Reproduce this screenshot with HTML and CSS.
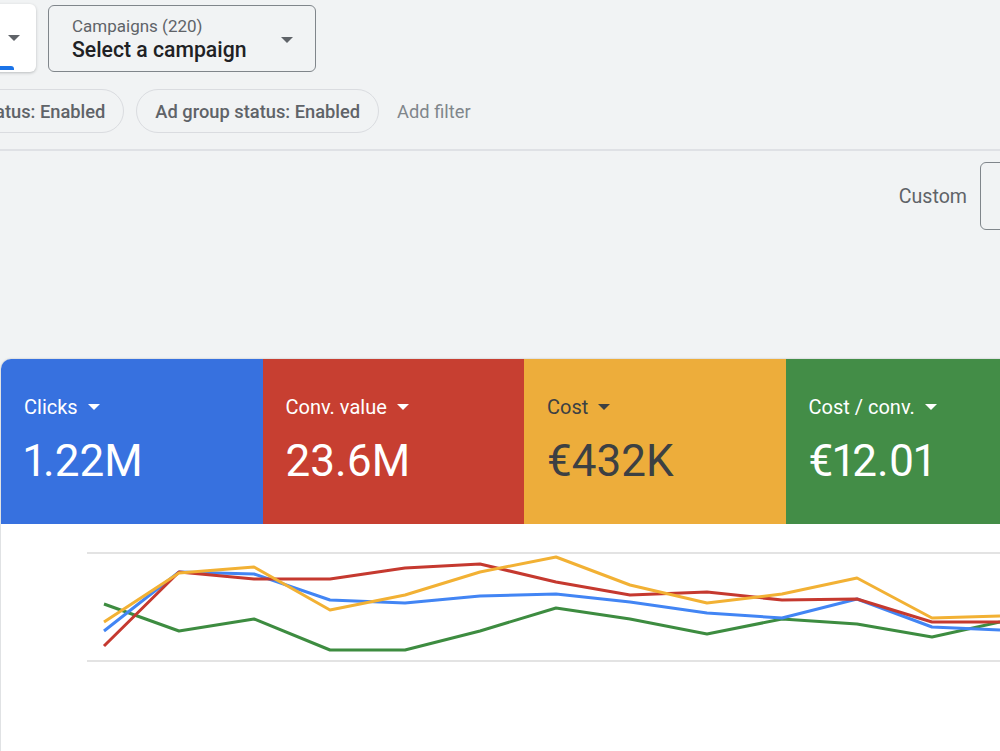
FILE: index.html
```html
<!DOCTYPE html>
<html lang="en">
<head>
<meta charset="utf-8">
<title>Overview</title>
<link rel="stylesheet" href="styles.css">
</head>
<body>
<div class="top-row">
  <div class="prev-card">
    <svg class="caret" width="12" height="6" viewBox="0 0 12 6"><path d="M0 0h12L6 6z" fill="#5f6368"/></svg>
  </div>
  <div class="campaign-select">
    <div class="cs-text">
      <div class="cs-label">Campaigns (220)</div>
      <div class="cs-value">Select a campaign</div>
    </div>
    <svg class="caret" width="12" height="6" viewBox="0 0 12 6"><path d="M0 0h12L6 6z" fill="#5f6368"/></svg>
  </div>
</div>
<div class="chips">
  <div class="chip chip-first">Campaign status: Enabled</div>
  <div class="chip">Ad group status: Enabled</div>
  <div class="add-filter">Add filter</div>
</div>
<div class="divider"></div>
<div class="date-row">
  <span class="custom">Custom</span>
  <div class="date-box"></div>
</div>
<div class="panel">
  <div class="metrics">
    <div class="metric blue">
      <div class="m-label">Clicks <svg width="12" height="6" viewBox="0 0 12 6"><path d="M0 0h12L6 6z" fill="currentColor"/></svg></div>
      <div class="m-value">1.22M</div>
    </div>
    <div class="metric red">
      <div class="m-label">Conv. value <svg width="12" height="6" viewBox="0 0 12 6"><path d="M0 0h12L6 6z" fill="currentColor"/></svg></div>
      <div class="m-value">23.6M</div>
    </div>
    <div class="metric yellow">
      <div class="m-label">Cost <svg width="12" height="6" viewBox="0 0 12 6"><path d="M0 0h12L6 6z" fill="currentColor"/></svg></div>
      <div class="m-value">€432K</div>
    </div>
    <div class="metric green">
      <div class="m-label">Cost / conv. <svg width="12" height="6" viewBox="0 0 12 6"><path d="M0 0h12L6 6z" fill="currentColor"/></svg></div>
      <div class="m-value">€12.01</div>
    </div>
  </div>
  <div class="chart">
    <svg class="chart-svg" width="1000" height="228" viewBox="0 523 1000 228">
      <line x1="87" y1="552" x2="1000" y2="552" stroke="#e3e3e3" stroke-width="2"/>
      <line x1="87" y1="660" x2="1000" y2="660" stroke="#e3e3e3" stroke-width="2"/>
      <g fill="none" stroke-width="3" stroke-linejoin="round">
        <polyline stroke="#3d8c40" points="104,603 179,630 254,618 330,649 405,649 480,630 556,607 630,618 707,633 782,618 857,623 932,636 1000,621"/>
        <polyline stroke="#4285f4" points="104,630 179,571 254,573 330,599 405,602 480,595 556,593 630,601 707,612 782,617 857,598 932,626 1000,629"/>
        <polyline stroke="#c5392f" points="104,645 179,571 254,578 330,578 405,567 480,563 556,581 630,594 707,591 782,599 857,598 932,621 1000,621"/>
        <polyline stroke="#f2b134" points="104,621 179,572 254,566 330,609 405,594 480,571 556,556 630,584 707,602 782,593 857,577 932,617 1000,615"/>
      </g>
    </svg>
  </div>
</div>
</body>
</html>
```
FILE: styles.css
```css
html, body {
  margin: 0;
  padding: 0;
}
body {
  background: #f1f3f4;
  font-family: Roboto, "Liberation Sans", sans-serif;
  color: #202124;
  overflow: hidden;
  width: 1000px;
  height: 751px;
}
.top-row {
  display: flex;
  gap: 12px;
  padding-top: 4px;
  height: 68px;
}
.prev-card {
  position: relative;
  width: 80px;
  margin-left: -44px;
  height: 68px;
  background: #fff;
  border-radius: 6px;
  box-shadow: 0 1px 3px rgba(60,64,67,.3);
  display: flex;
  align-items: center;
  justify-content: flex-end;
  padding-right: 16px;
  box-sizing: border-box;
}
.prev-card::after {
  content: "";
  position: absolute;
  left: 0;
  bottom: 2px;
  width: 58px;
  height: 4px;
  background: #1a73e8;
  border-radius: 0 3px 0 0;
}
.campaign-select {
  margin-top: 1px;
  width: 268px;
  height: 67px;
  box-sizing: border-box;
  border: 1px solid #80868b;
  border-radius: 6px;
  display: flex;
  align-items: center;
  justify-content: space-between;
  padding: 2px 22px 0 23px;
}
.cs-label {
  font-size: 17px;
  color: #5f6368;
  line-height: 20px;
}
.cs-value {
  font-size: 21.2px;
  font-weight: 500;
  color: #202124;
  line-height: 28px;
}
.chips {
  display: flex;
  align-items: center;
  gap: 12px;
  margin-top: 17px;
  height: 44px;
}
.chip {
  height: 44px;
  box-sizing: border-box;
  border: 1px solid #dadce0;
  border-radius: 22px;
  padding: 0 18px;
  display: flex;
  align-items: center;
  font-size: 18.3px;
  font-weight: 500;
  color: #5f6368;
  white-space: nowrap;
}
.chip-first {
  margin-left: -127px;
}
.add-filter {
  margin-left: 6px;
  font-size: 18.3px;
  color: #80868b;
}
.divider {
  margin-top: 16px;
  height: 2px;
  background: #dfe1e5;
}
.date-row {
  display: flex;
  align-items: center;
  justify-content: flex-end;
  gap: 13px;
  margin-top: 11px;
  height: 68px;
  margin-right: -100px;
}
.custom {
  font-size: 19.6px;
  color: #5f6368;
}
.date-box {
  width: 120px;
  height: 68px;
  box-sizing: border-box;
  border: 1px solid #80868b;
  border-radius: 6px;
}
.panel {
  margin-top: 129px;
  margin-left: 1px;
  width: 1100px;
  background: #fff;
  border-radius: 10px 0 0 0;
  box-shadow: 0 0 2px rgba(60,64,67,.35);
  overflow: hidden;
  height: 400px;
}
.metrics {
  display: flex;
}
.metric {
  width: 261.5px;
  height: 165px;
  box-sizing: border-box;
  padding: 36px 0 0 23px;
  color: #fff;
}
.blue { background: #3771df; }
.red { background: #c73f31; }
.yellow { background: #edad3b; color: #3c4043; }
.green { background: #438d47; }
.m-label {
  font-size: 20px;
  line-height: 24px;
  display: flex;
  align-items: center;
  gap: 10px;
}
.m-value {
  margin-top: 16px;
  font-size: 44px;
  line-height: 52px;
  font-variant-numeric: proportional-nums;
}
.chart {
  height: 235px;
}
.chart-svg {
  display: block;
  margin-left: -1px;
}
```
